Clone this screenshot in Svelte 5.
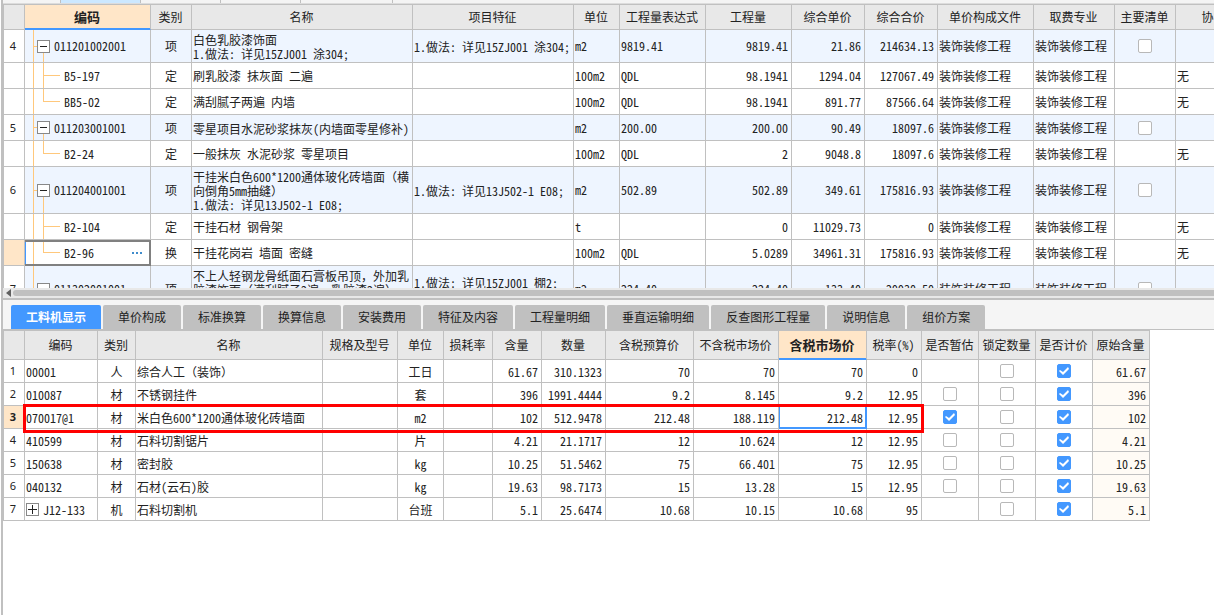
<script lang="ts">
    interface Column {
        title: string;
        width: number;
    }

    interface Item {
        no: string;
        kind: string;
        code: string;
        type: string;
        name: string;
        feature: string;
        unit: string;
        expr: string;
        amount: string;
        price: string;
        total: string;
        current?: boolean;
    }

    interface Resource {
        code: string;
        type: string;
        name: string;
        unit: string;
        values: string[];
        estimated: boolean | null;
        locked: boolean;
        priced: boolean;
        origin: string;
        parent?: boolean;
    }

    const ITEM_COLUMNS: Column[] = [
        { title: "", width: 21 },
        { title: "编码", width: 126 },
        { title: "类别", width: 41 },
        { title: "名称", width: 221 },
        { title: "项目特征", width: 161 },
        { title: "单位", width: 46 },
        { title: "工程量表达式", width: 86 },
        { title: "工程量", width: 86 },
        { title: "综合单价", width: 73 },
        { title: "综合合价", width: 73 },
        { title: "单价构成文件", width: 96 },
        { title: "取费专业", width: 81 },
        { title: "主要清单", width: 61 },
        { title: "协", width: 65 },
    ];

    const RESOURCE_COLUMNS: Column[] = [
        { title: "", width: 21 },
        { title: "编码", width: 73 },
        { title: "类别", width: 38 },
        { title: "名称", width: 187 },
        { title: "规格及型号", width: 75 },
        { title: "单位", width: 46 },
        { title: "损耗率", width: 49 },
        { title: "含量", width: 49 },
        { title: "数量", width: 64 },
        { title: "含税预算价", width: 88 },
        { title: "不含税市场价", width: 85 },
        { title: "含税市场价", width: 88 },
        { title: "税率(%)", width: 55 },
        { title: "是否暂估", width: 57 },
        { title: "锁定数量", width: 57 },
        { title: "是否计价", width: 57 },
        { title: "原始含量", width: 57 },
    ];

    const PROFESSION = "装饰装修工程";
    const ITEM_ACTIVE = 1;
    const RESOURCE_ACTIVE = 11;
    const MARK_LAST = 12;

    // kind: group = bill item, child = quota below it, last = final quota of the item
    let items: Item[] = [
        { no: "4", kind: "group", code: "011201002001", type: "项", name: "白色乳胶漆饰面\n1.做法: 详见15ZJ001 涂304;", feature: "1.做法: 详见15ZJ001 涂304;", unit: "m2", expr: "9819.41", amount: "9819.41", price: "21.86", total: "214634.13" },
        { no: "", kind: "child", code: "B5-197", type: "定", name: "刷乳胶漆 抹灰面 二遍", feature: "", unit: "100m2", expr: "QDL", amount: "98.1941", price: "1294.04", total: "127067.49" },
        { no: "", kind: "last", code: "BB5-02", type: "定", name: "满刮腻子两遍 内墙", feature: "", unit: "100m2", expr: "QDL", amount: "98.1941", price: "891.77", total: "87566.64" },
        { no: "5", kind: "group", code: "011203001001", type: "项", name: "零星项目水泥砂浆抹灰(内墙面零星修补)", feature: "", unit: "m2", expr: "200.00", amount: "200.00", price: "90.49", total: "18097.6" },
        { no: "", kind: "last", code: "B2-24", type: "定", name: "一般抹灰 水泥砂浆 零星项目", feature: "", unit: "100m2", expr: "QDL", amount: "2", price: "9048.8", total: "18097.6" },
        { no: "6", kind: "group", code: "011204001001", type: "项", name: "干挂米白色600*1200通体玻化砖墙面（横\n向倒角5mm抽缝）\n1.做法: 详见13J502-1 E08;", feature: "1.做法: 详见13J502-1 E08;", unit: "m2", expr: "502.89", amount: "502.89", price: "349.61", total: "175816.93" },
        { no: "", kind: "child", code: "B2-104", type: "定", name: "干挂石材 钢骨架", feature: "", unit: "t", expr: "", amount: "0", price: "11029.73", total: "0" },
        { no: "", kind: "last", code: "B2-96", type: "换", name: "干挂花岗岩 墙面 密缝", feature: "", unit: "100m2", expr: "QDL", amount: "5.0289", price: "34961.31", total: "175816.93", current: true },
        { no: "7", kind: "group", code: "011302001001", type: "项", name: "不上人轻钢龙骨纸面石膏板吊顶，外加乳\n胶漆饰面（满刮腻子2遍、乳胶漆2遍）\n1.做法: 详见15ZJ001 棚2;", feature: "1.做法: 详见15ZJ001 棚2;\n\u00a0", unit: "m2", expr: "224.40", amount: "224.40", price: "133.40", total: "29930.50" },
    ];

    let resources: Resource[] = [
        { code: "00001", type: "人", name: "综合人工（装饰）", unit: "工日", values: ["61.67", "310.1323", "70", "70", "70", "0"], estimated: null, locked: false, priced: true, origin: "61.67" },
        { code: "010087", type: "材", name: "不锈钢挂件", unit: "套", values: ["396", "1991.4444", "9.2", "8.145", "9.2", "12.95"], estimated: false, locked: false, priced: true, origin: "396" },
        { code: "070017@1", type: "材", name: "米白色600*1200通体玻化砖墙面", unit: "m2", values: ["102", "512.9478", "212.48", "188.119", "212.48", "12.95"], estimated: true, locked: false, priced: true, origin: "102" },
        { code: "410599", type: "材", name: "石料切割锯片", unit: "片", values: ["4.21", "21.1717", "12", "10.624", "12", "12.95"], estimated: false, locked: false, priced: true, origin: "4.21" },
        { code: "150638", type: "材", name: "密封胶", unit: "kg", values: ["10.25", "51.5462", "75", "66.401", "75", "12.95"], estimated: false, locked: false, priced: true, origin: "10.25" },
        { code: "040132", type: "材", name: "石材(云石)胶", unit: "kg", values: ["19.63", "98.7173", "15", "13.28", "15", "12.95"], estimated: false, locked: false, priced: true, origin: "19.63" },
        { code: "J12-133", type: "机", name: "石料切割机", unit: "台班", values: ["5.1", "25.6474", "10.68", "10.15", "10.68", "95"], estimated: null, locked: false, priced: true, origin: "5.1", parent: true },
    ];

    const TABS = [
        "工料机显示",
        "单价构成",
        "标准换算",
        "换算信息",
        "安装费用",
        "特征及内容",
        "工程量明细",
        "垂直运输明细",
        "反查图形工程量",
        "说明信息",
        "组价方案",
    ];
    let activeTab = 0;
    let currentResource = 2;

    function sumWidth(list: Column[]) {
        let sum = 0;
        list.forEach((c) => (sum += c.width));
        return sum;
    }

    // odd entries are the full-width punctuation marks
    function splitMarks(text: string) {
        return text.split(/([（），、])/);
    }

    const itemsWidth = sumWidth(ITEM_COLUMNS) + 1;
    const resourcesWidth = sumWidth(RESOURCE_COLUMNS) + 1;
    const markWidth = sumWidth(RESOURCE_COLUMNS.slice(1, MARK_LAST + 1)) + 4;
</script>

<div class="page">
    <section class="upper">
        <div class="strip">
            <span class="piece first"></span>
            <span class="piece on"></span>
            <span class="piece"></span>
            <span class="piece"></span>
            <span class="piece wide"></span>
        </div>
        <div class="view">
            <table class="items" style="width: {itemsWidth}px">
                <colgroup>
                    {#each ITEM_COLUMNS as col}
                        <col style="width: {col.width}px" />
                    {/each}
                </colgroup>
                <thead>
                    <tr>
                        {#each ITEM_COLUMNS as col, i}
                            <th class:active={i == ITEM_ACTIVE}>{col.title}</th>
                        {/each}
                    </tr>
                </thead>
                <tbody>
                    {#each items as item}
                        <tr class={item.kind}>
                            <td class="no" class:current={item.current}>{item.no}</td>
                            <td class="tree" class:selected={item.current}>
                                <div class="node">
                                    {#if item.kind == "group"}
                                        <button class="toggle" aria-label="折叠">
                                            <svg width="11" height="11" viewBox="0 0 11 11"><path d="M2 5.5H9" /></svg>
                                        </button>
                                    {/if}
                                    <span>{item.code}</span>
                                    {#if item.current}
                                        <button class="more" aria-label="更多">
                                            <svg width="11" height="3" viewBox="0 0 11 3"><path d="M0 0h2v2H0zM4 0h2v2H4zM8 0h2v2H8z" /></svg>
                                        </button>
                                    {/if}
                                </div>
                            </td>
                            <td class="center">{item.type}</td>
                            <td class="text">{#each splitMarks(item.name) as part, p}{#if p % 2}<span class="full">{part}</span>{:else}{part}{/if}{/each}</td>
                            <td class="text">{item.feature}</td>
                            <td>{item.unit}</td>
                            <td>{item.expr}</td>
                            <td class="num">{item.amount}</td>
                            <td class="num">{item.price}</td>
                            <td class="num">{item.total}</td>
                            <td>{PROFESSION}</td>
                            <td>{PROFESSION}</td>
                            <td class="check">
                                {#if item.kind == "group"}
                                    <input type="checkbox" aria-label="主要清单" />
                                {/if}
                            </td>
                            <td>{item.kind == "group" ? "" : "无"}</td>
                        </tr>
                    {/each}
                </tbody>
            </table>
        </div>
        <div class="scroll">
            <button class="arrow" aria-label="向左滚动">
                <svg width="5" height="8" viewBox="0 0 5 8"><path d="M5 0V8L0 4z" /></svg>
            </button>
            <div class="thumb"></div>
        </div>
    </section>

    <section class="lower">
        <div class="tabs" role="tablist">
            {#each TABS as tab, i}
                <button
                    class="tab"
                    class:open={activeTab == i}
                    role="tab"
                    aria-selected={activeTab == i}
                    on:click={() => (activeTab = i)}>{tab}</button
                >
            {/each}
        </div>
        <div class="view">
            <table class="resources" style="width: {resourcesWidth}px">
                <colgroup>
                    {#each RESOURCE_COLUMNS as col}
                        <col style="width: {col.width}px" />
                    {/each}
                </colgroup>
                <thead>
                    <tr>
                        {#each RESOURCE_COLUMNS as col, i}
                            <th class:active={i == RESOURCE_ACTIVE}>{col.title}</th>
                        {/each}
                    </tr>
                </thead>
                <tbody>
                    {#each resources as res, r}
                        <tr>
                            <td class="no" class:current={r == currentResource}>{r + 1}</td>
                            <td class="code">
                                <div class="node">
                                    {#if res.parent}
                                        <button class="toggle" aria-label="展开">
                                            <svg width="11" height="11" viewBox="0 0 11 11"><path d="M1 5.5H10M5.5 1V10" /></svg>
                                        </button>
                                    {/if}
                                    <span>{res.code}</span>
                                </div>
                                {#if r == currentResource}
                                    <div class="mark" style="width: {markWidth}px"></div>
                                {/if}
                            </td>
                            <td class="center">{res.type}</td>
                            <td class="text">{#each splitMarks(res.name) as part, p}{#if p % 2}<span class="full">{part}</span>{:else}{part}{/if}{/each}</td>
                            <td></td>
                            <td class="center">{res.unit}</td>
                            <td></td>
                            {#each res.values as value, v}
                                <td class="num" class:editing={r == currentResource && v == 4}>{value}</td>
                            {/each}
                            <td class="check">
                                {#if res.estimated != null}
                                    <input type="checkbox" aria-label="是否暂估" bind:checked={res.estimated} />
                                {/if}
                            </td>
                            <td class="check">
                                <input type="checkbox" aria-label="锁定数量" bind:checked={res.locked} />
                            </td>
                            <td class="check">
                                <input type="checkbox" aria-label="是否计价" bind:checked={res.priced} />
                            </td>
                            <td class="num origin">{res.origin}</td>
                        </tr>
                    {/each}
                </tbody>
            </table>
        </div>
    </section>
</div>

<style>
    :global(body) {
        margin: 0;
        background: #fff;
    }

    .page {
        display: grid;
        grid-template-rows: 298fr 317fr;
        grid-template-columns: minmax(0, 1fr);
        box-sizing: border-box;
        height: 100vh;
        margin-left: 1px;
        border-left: 2px solid #c0c0c0;
        overflow: hidden;
        color: #222;
        font-family: "Noto Sans CJK SC", sans-serif;
        font-size: 12px;
        line-height: 14px;
        font-feature-settings: "hwid";
    }

    button {
        font: inherit;
        color: inherit;
        padding: 0;
        margin: 0;
        border: none;
        background: none;
        cursor: pointer;
    }

    svg {
        display: block;
    }

    .upper {
        display: flex;
        flex-direction: column;
        min-height: 0;
    }

    .strip {
        display: flex;
        flex: none;
        height: 3px;
        background: #f4f4f4;
        border-bottom: 1px solid #dcdcdc;
    }
    .piece {
        box-sizing: border-box;
        width: 80px;
        border-right: 1px solid #c0c0c0;
    }
    .first {
        width: 58px;
    }
    .wide {
        width: 92px;
    }
    .on {
        background: #cce8ff;
    }

    .view {
        flex: 1;
        min-height: 0;
        overflow: hidden;
    }

    table {
        table-layout: fixed;
        border-collapse: separate;
        border-spacing: 0;
        border-left: 1px solid #c0c0c0;
        border-top: 1px solid #c0c0c0;
    }
    th,
    td {
        box-sizing: border-box;
        border-right: 1px solid #c0c0c0;
        border-bottom: 1px solid #c0c0c0;
        white-space: nowrap;
        overflow: hidden;
    }
    th {
        padding: 0 1px 0 0;
        background: #e8e8e8;
        font-weight: normal;
        text-align: center;
    }
    td {
        padding: 1px 3px 0 1px;
        background-color: #fff;
        text-align: left;
    }
    .items th {
        height: 25px;
    }
    .items td {
        height: 26px;
    }
    .items .group td {
        padding-top: 2px;
        padding-bottom: 2px;
        background-color: #eef5ff;
    }
    .items .group td.text {
        padding-top: 3px;
        padding-bottom: 1px;
    }
    .resources th {
        height: 29px;
    }
    .resources td {
        height: 23px;
    }
    th.active {
        background: #ffe6c8;
        border-bottom-color: #4398ff;
        box-shadow: inset 0 -1px #4398ff;
        font-size: 13px;
        font-weight: bold;
    }

    .text {
        white-space: pre;
    }
    .full {
        font-feature-settings: normal;
    }
    .center {
        padding-right: 1px;
        text-align: center;
    }
    .check {
        padding: 0;
    }
    .num {
        text-align: right;
    }
    td.no,
    .items .group td.no {
        padding: 0 2px 0 0;
        background-color: #fff;
        font-family: "Noto Sans", sans-serif;
        font-size: 11px;
        text-align: center;
    }
    td.no.current {
        background-color: #ffe6c8;
        font-weight: bold;
    }
    td.origin {
        background-color: #fffbf5;
    }

    .node {
        display: flex;
        align-items: center;
        gap: 4px;
    }
    .toggle {
        box-sizing: border-box;
        flex: none;
        width: 13px;
        height: 13px;
        border: 1px solid #888;
        background: #fff;
    }
    .toggle path {
        stroke: #222;
        stroke-width: 1;
        shape-rendering: crispEdges;
    }

    /* guide lines of the item tree */
    td.tree {
        --line: linear-gradient(#ffc87c, #ffc87c);
        background-repeat: no-repeat;
    }
    .group td.tree {
        padding-left: 12px;
        background-image: var(--line), var(--line), var(--line);
        background-size: 1px 100%, 5px 1px, 1px 50%;
        background-position: 8px 0, 8px 50%, 18px 100%;
    }
    .child td.tree,
    .last td.tree {
        padding-left: 39px;
        background-image: var(--line), var(--line), var(--line);
        background-size: 1px 100%, 17px 1px, 1px 100%;
        background-position: 8px 0, 18px 50%, 18px 0;
    }
    .last td.tree {
        background-size: 1px 100%, 17px 1px, 1px 50%;
    }
    td.selected {
        box-shadow: inset 0 2px #808080, inset 0 -1px #808080, inset -1px 0 #808080, inset 1px 0 #4398ff;
        border-color: #808080;
    }
    .more {
        margin-left: auto;
        padding-right: 4px;
    }
    .more path {
        fill: #3f8ccc;
    }

    input[type="checkbox"] {
        appearance: none;
        display: block;
        position: relative;
        box-sizing: border-box;
        width: 14px;
        height: 14px;
        margin: 0 auto;
        border: 1px solid #b8b8b8;
        border-radius: 2px;
        background: #fff;
    }
    input[type="checkbox"]:checked {
        border-color: #4398ff;
        background: #4398ff;
    }
    input[type="checkbox"]:checked::after {
        content: "";
        position: absolute;
        inset: 0;
        background: #fff;
        clip-path: polygon(1px 6px, 2px 5px, 5px 7px, 10px 2px, 11px 4px, 5px 10px);
    }

    .scroll {
        display: flex;
        align-items: center;
        flex: none;
        height: 10px;
        background: #e8e8e8;
    }
    .arrow {
        padding: 0 2px 0 3px;
    }
    .arrow path {
        fill: #606060;
    }
    .thumb {
        flex: 1;
        height: 6px;
        border-radius: 3px 0 0 3px;
        background: #c0c0c0;
    }

    .lower {
        display: flex;
        flex-direction: column;
        min-height: 0;
        border-top: 2px solid #c0c0c0;
    }
    .tabs {
        display: flex;
        flex: none;
        gap: 2px;
        padding: 5px 0 0 8px;
        background: #f5f5f5;
        border-bottom: 1px solid #c0c0c0;
    }
    .tab {
        height: 24px;
        padding: 0 15px;
        border-radius: 2px 2px 0 0;
        background: #c0c0c0;
        white-space: nowrap;
    }
    .tab.open {
        background: #4398ff;
        color: #fff;
        font-weight: bold;
    }

    .code {
        position: relative;
        overflow: visible;
    }
    /* red frame lies over the row, past the edges of its own cell */
    .mark {
        position: absolute;
        z-index: 1;
        top: -2px;
        left: -2px;
        box-sizing: border-box;
        height: 29px;
        border: 3px solid #f00;
        pointer-events: none;
    }
    .editing {
        border-right-color: #4398ff;
        border-bottom-color: #4398ff;
        box-shadow: inset 1px 0 #4398ff, inset 0 -1px #4398ff, inset -1px 0 #4398ff;
    }
</style>
